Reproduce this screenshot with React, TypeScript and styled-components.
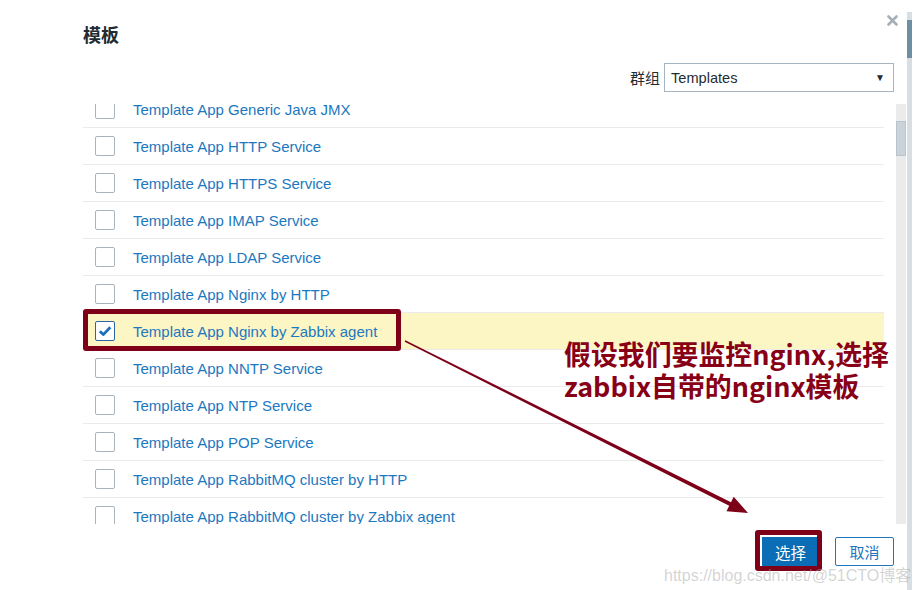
import React from 'react'
import styled, { createGlobalStyle } from 'styled-components'

const GlobalStyle = createGlobalStyle`
  html, body {
    margin: 0;
    padding: 0;
    background: #fff;
  }
  body {
    font-family: Arial, "Liberation Sans", "Noto Sans CJK SC", sans-serif;
  }
`

const templates = [
  'Template App Generic Java JMX',
  'Template App HTTP Service',
  'Template App HTTPS Service',
  'Template App IMAP Service',
  'Template App LDAP Service',
  'Template App Nginx by HTTP',
  'Template App Nginx by Zabbix agent',
  'Template App NNTP Service',
  'Template App NTP Service',
  'Template App POP Service',
  'Template App RabbitMQ cluster by HTTP',
  'Template App RabbitMQ cluster by Zabbix agent',
  'Template App RabbitMQ node by HTTP',
  'Template App SMTP Service',
  'Template App SSH Service',
]

const selected = 'Template App Nginx by Zabbix agent'

export const App = () => {
  return (
    <>
      <GlobalStyle />
      <Page>
        <Dialog>
          <Header>
            <Title>模板</Title>
            <CloseButton aria-label='close'>
              <svg width='11' height='11' viewBox='0 0 11 11'>
                <path d='M1.5 1.5 L9.5 9.5 M9.5 1.5 L1.5 9.5' stroke='#a6b0b8' strokeWidth='2.6' strokeLinecap='round' />
              </svg>
            </CloseButton>
          </Header>

          <FilterRow>
            <FilterLabel>群组</FilterLabel>
            <Select>
              <span>Templates</span>
              <Caret>▼</Caret>
            </Select>
          </FilterRow>

          <ListArea>
            <Viewport>
              <List>
                {templates.map(name => (
                  <Row key={name} $active={name === selected}>
                    <Checkbox $checked={name === selected}>
                      {name === selected && (
                        <svg width='14' height='12' viewBox='0 0 14 12'>
                          <path d='M1.8 6.2 L5.3 9.6 L12.3 2.2' fill='none' stroke='#1a6fbf' strokeWidth='2.8' strokeLinejoin='round' />
                        </svg>
                      )}
                    </Checkbox>
                    <Link>{name}</Link>
                  </Row>
                ))}
              </List>
            </Viewport>
            <Track>
              <Thumb />
            </Track>
          </ListArea>

          <Footer>
            <PrimaryButton>选择</PrimaryButton>
            <SecondaryButton>取消</SecondaryButton>
          </Footer>

          <Frame style={{ left: 83, top: 309, width: 318, height: 42 }} />
          <Frame style={{ left: 755, top: 530, width: 67, height: 41 }} />

          <Note>
            假设我们要监控nginx,选择<br />
            zabbix自带的nginx模板
          </Note>

          <Arrow width='922' height='590' viewBox='0 0 922 590'>
            <polygon
              fill='#7d0018'
              points='404.7,341.7 729.2,505.8 726.5,511.2 748,513 733.7,496.8 731,502.2 405.3,340.3'
            />
          </Arrow>

          <Watermark>https://blog.csdn.net/@51CTO博客</Watermark>
        </Dialog>
        <PageScroll>
          <PageThumb />
        </PageScroll>
      </Page>
    </>
  )
}

export default App

const Page = styled.div`
  display: flex;
  width: 922px;
  height: 590px;
  overflow: hidden;
  background: #fff;
`

const Dialog = styled.div`
  position: relative;
  width: 907px;
  box-sizing: border-box;
  padding: 22px 13px 0 83px;
  display: flex;
  flex-direction: column;
`

const Header = styled.div`
  display: flex;
  align-items: center;
  height: 24px;
`

const Title = styled.h2`
  margin: 0;
  font-size: 18px;
  line-height: 24px;
  font-weight: 700;
  color: #1f2c33;
  font-family: "Noto Sans CJK SC", sans-serif;
`

const CloseButton = styled.button`
  position: absolute;
  top: 14px;
  right: 8px;
  width: 13px;
  height: 13px;
  padding: 0;
  border: none;
  background: none;
  display: flex;
  align-items: center;
  justify-content: center;
`

const FilterRow = styled.div`
  display: flex;
  justify-content: flex-end;
  align-items: center;
  gap: 4px;
  margin-top: 17px;
`

const FilterLabel = styled.span`
  font-size: 15px;
  color: #1f2c33;
  font-family: "Noto Sans CJK SC", sans-serif;
`

const Select = styled.div`
  width: 230px;
  height: 29px;
  box-sizing: border-box;
  border: 1px solid #a5b6c2;
  padding: 0 8px 0 6px;
  display: flex;
  align-items: center;
  justify-content: space-between;
  font-size: 14.6px;
  color: #1f2c33;
`

const Caret = styled.span`
  font-size: 10px;
  color: #1f2c33;
`

const ListArea = styled.div`
  display: flex;
  margin-top: 12px;
  margin-right: -12px;
  height: 420px;
  gap: 12px;
`

const Viewport = styled.div`
  flex: 1;
  overflow: hidden;
`

const List = styled.div`
  margin-top: -13px;
`

const Row = styled.div<{ $active?: boolean }>`
  display: flex;
  align-items: center;
  gap: 18px;
  height: 36px;
  padding-left: 12px;
  border-bottom: 1px solid #ebebeb;
  background: ${p => (p.$active ? '#fcf5c4' : 'transparent')};
`

const Checkbox = styled.span<{ $checked?: boolean }>`
  width: 20px;
  height: 20px;
  box-sizing: border-box;
  border: 1px solid ${p => (p.$checked ? '#2a66a3' : '#a9b4bd')};
  border-radius: 2px;
  background: #fff;
  display: flex;
  align-items: center;
  justify-content: center;
`

const Link = styled.span`
  font-size: 15px;
  color: #1c78c0;
`

const Track = styled.div`
  width: 10px;
  background: #ebebeb;
`

const Thumb = styled.div`
  margin-top: 17px;
  height: 35px;
  box-sizing: border-box;
  background: #cad3da;
  border: 1px solid #b9c4cc;
`

const Footer = styled.div`
  display: flex;
  justify-content: flex-end;
  gap: 16px;
  margin-top: 13px;
`

const PrimaryButton = styled.button`
  width: 57px;
  height: 30px;
  border: none;
  background: #0a6db6;
  color: #fff;
  font-size: 15.5px;
  font-family: "Noto Sans CJK SC", sans-serif;
  padding: 0;
`

const SecondaryButton = styled.button`
  width: 59px;
  height: 29px;
  border: 1px solid #1f76bd;
  border-radius: 2px;
  background: #fff;
  color: #1f76bd;
  font-size: 15px;
  font-family: "Noto Sans CJK SC", sans-serif;
  padding: 0;
`

const Frame = styled.div`
  position: absolute;
  box-sizing: border-box;
  border: 5px solid #7f0019;
  border-radius: 3px;
  pointer-events: none;
`

const Note = styled.div`
  position: absolute;
  left: 564px;
  top: 338px;
  font-family: "Noto Sans CJK SC", sans-serif;
  font-weight: 700;
  font-size: 26.9px;
  line-height: 32px;
  color: #870016;
  white-space: nowrap;
`

const Arrow = styled.svg`
  position: absolute;
  left: 0;
  top: 0;
  pointer-events: none;
`

const Watermark = styled.div`
  position: absolute;
  left: 664px;
  top: 562px;
  font-size: 16px;
  color: rgba(170, 170, 170, 0.5);
  white-space: nowrap;
  font-family: Arial, "Liberation Sans", "Noto Sans CJK SC", sans-serif;
`

const PageScroll = styled.div`
  width: 5px;
  margin-top: 12px;
  background: #d8dfe4;
`

const PageThumb = styled.div`
  margin-top: 8px;
  height: 38px;
  background: #6e8ea2;
`
